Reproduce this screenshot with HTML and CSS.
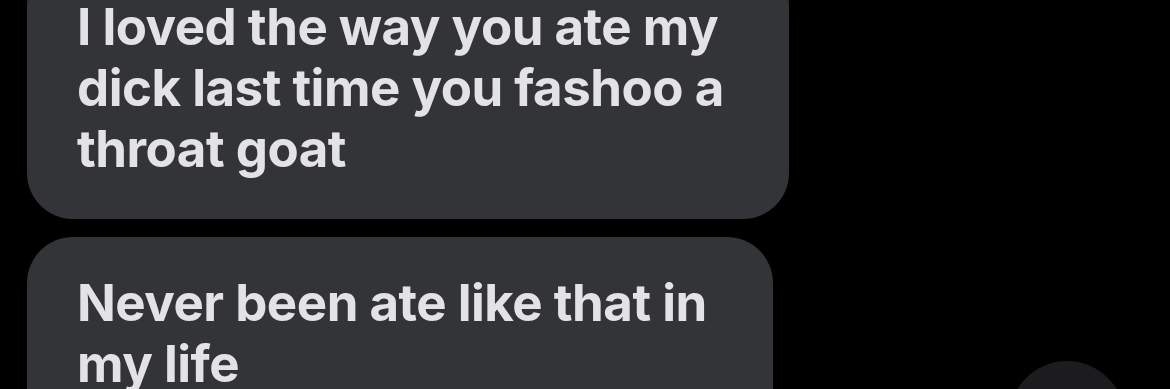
FILE: index.html
```html
<!DOCTYPE html>
<html lang="en">
<head>
<meta charset="utf-8">
<link rel="stylesheet" href="styles.css">
</head>
<body>
<main class="thread">
  <div class="bubble bubble-first">I loved the way you ate my<br>dick last time you fashoo a<br>throat goat</div>
  <div class="bubble bubble-second">Never been ate like that in<br>my life</div>
</main>
<div class="fab"></div>
</body>
</html>
```
FILE: styles.css
```css
html, body {
  margin: 0;
  padding: 0;
  background: #000;
  width: 1170px;
  height: 389px;
  overflow: hidden;
}
.thread {
  display: flex;
  flex-direction: column;
  align-items: flex-start;
  gap: 18px;
  padding-left: 27px;
  margin-top: -39px;
}
.bubble {
  box-sizing: border-box;
  background: #333438;
  color: #e3e3e5;
  font-family: Inter, "Noto Sans", sans-serif;
  font-weight: 700;
  font-size: 51px;
  line-height: 61px;
  letter-spacing: -0.5px;
  border-radius: 46px;
  padding: 35px 20px 40px 50px;
  white-space: nowrap;
}
.bubble-first { width: 762px; }
.bubble-second { width: 746px; height: 220px; }
.fab {
  position: absolute;
  left: 1009px;
  top: 361px;
  width: 116px;
  height: 116px;
  border-radius: 50%;
  background: #1c1c1e;
}
```
